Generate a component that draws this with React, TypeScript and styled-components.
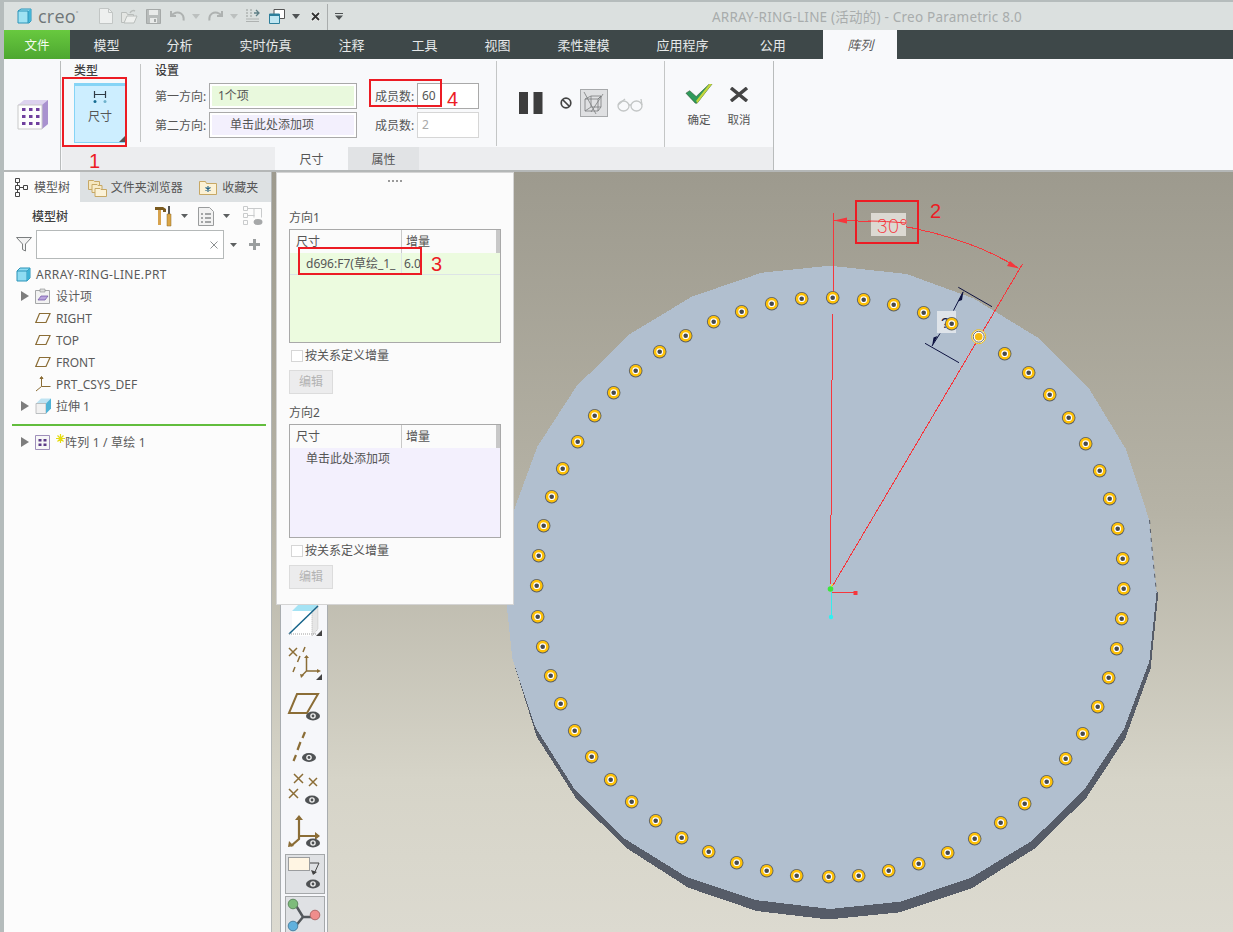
import React from "react";
import styled, { createGlobalStyle } from "styled-components";

const Global = createGlobalStyle`
  html, body { margin: 0; padding: 0; background: #b5bcbc; }
  body { font-family: "Noto Sans", "Noto Sans CJK SC", sans-serif; font-size: 12px; color: #555; }
  * { box-sizing: border-box; }
`;

const RED = "#ec1c24";

const Page = styled.div`
  position: relative;
  width: 1233px;
  height: 932px;
  overflow: hidden;
  padding: 2px 0 0 4px;
  background: #b5bcbc;
`;

/* ---------- title bar ---------- */
const TitleBar = styled.div`
  height: 28px;
  background: #dbe0df;
  display: flex;
  align-items: center;
  padding-left: 13px;
`;
const LogoText = styled.span`
  font-family: "Open Sans", sans-serif;
  font-size: 18px;
  color: #6f7678;
  width: 60px;
  padding-left: 6px;
  line-height: 28px;
  letter-spacing: 0.2px;
  sup { font-size: 6px; position: relative; top: -1px; vertical-align: super; line-height: 0; }
`;
const QuickSlot = styled.span<{ $w: number }>`
  width: ${(p) => p.$w}px;
  height: 28px;
  flex: none;
  display: flex;
  align-items: center;
`;
const TitleText = styled.span`
  margin-left: 369px;
  font-size: 13.5px;
  letter-spacing: 0.22px;
  color: #a8acac;
  white-space: nowrap;
`;

/* ---------- tab bar ---------- */
const TabBar = styled.div`
  height: 29px;
  background: #3e4849;
  display: flex;
  align-items: stretch;
`;
const FileTab = styled.div`
  width: 66px;
  background: linear-gradient(180deg, #68c93f 0%, #4da730 100%);
  color: #f4fbef;
  font-size: 12.5px;
  display: flex;
  align-items: center;
  justify-content: center;
`;
const MenuTab = styled.div<{ $gap?: number }>`
  padding: 0 23.5px;
  margin-left: ${(p) => p.$gap ?? 0}px;
  color: #e6e9e9;
  font-size: 13px;
  display: flex;
  align-items: center;
`;
const ActiveTab = styled.div`
  margin-left: 14px;
  width: 74px;
  background: #f8f9fb;
  color: #5a5a5a;
  font-size: 13px;
  font-style: italic;
  display: flex;
  align-items: center;
  justify-content: center;
`;

/* ---------- ribbon ---------- */
const Ribbon = styled.div`
  height: 113px;
  background: #f8f9fb;
  display: flex;
  border-bottom: 2px solid #b4b7b7;
`;
const RibbonLead = styled.div`
  width: 56px;
  flex: none;
  display: flex;
  align-items: center;
  padding: 0 0 0 13px;
`;
const RibbonMain = styled.div`
  width: 714px;
  flex: none;
  margin-top: 2px;
  border-left: 1px solid #b9bcbc;
  border-right: 1px solid #b9bcbc;
  display: flex;
  flex-direction: column;
`;
const RibbonTools = styled.div`
  height: 86px;
  display: flex;
`;
const RibbonTabs = styled.div`
  height: 23px;
  background: #ecedef;
  margin-left: 1px;
  padding-left: 213px;
  display: flex;
`;
const SubTab = styled.div<{ $active?: boolean; $w: number }>`
  width: ${(p) => p.$w}px;
  background: ${(p) => (p.$active ? "#f8f9fb" : "#e1e3e5")};
  color: #555;
  font-size: 12px;
  display: flex;
  align-items: center;
  justify-content: center;
`;
const TypeGroup = styled.div`
  width: 79px;
  padding: 3px 0 0 13px;
  flex: none;
`;
const GroupLabel = styled.div`
  font-size: 12px;
  line-height: 14px;
  color: #3f3f3f;
  font-weight: 500;
`;
const TypeButton = styled.div`
  margin-top: 5px;
  width: 52px;
  height: 60px;
  background: #cdeeff;
  border: 1px solid #86d4f6;
  border-top: 3px solid #86d4f6;
  display: flex;
  flex-direction: column;
  align-items: center;
  position: relative;
  padding-top: 5px;
  color: #555;
  font-size: 12px;
  line-height: 16px;
`;
const CornerMark = styled.span`
  position: absolute;
  right: 0;
  bottom: 0;
  width: 0;
  height: 0;
  border-left: 6px solid transparent;
  border-bottom: 6px solid #555;
`;
const SettingsGroup = styled.div`
  width: 235px;
  flex: none;
  margin-top: 3px;
  height: 78px;
  border-left: 1px solid #c4c6c6;
  padding-left: 14px;
`;
const FieldRow = styled.div<{ $top: number }>`
  margin-top: ${(p) => p.$top}px;
  display: flex;
  align-items: center;
  white-space: nowrap;
`;
const FieldLabel = styled.span<{ $w: number }>`
  width: ${(p) => p.$w}px;
  flex: none;
  font-size: 12px;
  color: #555;
`;
const DropField = styled.div<{ $bg: string; $indent: number }>`
  width: 148px;
  height: 26px;
  border: 1px solid #a9a9a9;
  background: #fff;
  padding: 2px;
  div {
    height: 100%;
    background: ${(p) => p.$bg};
    padding-left: ${(p) => p.$indent}px;
    font-size: 12px;
    line-height: 20px;
    color: #555;
  }
`;
const MemberGroup = styled.div`
  width: 121px;
  flex: none;
  padding: 22px 0 0 0;
`;
const MemberInput = styled.div<{ $off?: boolean }>`
  width: 62px;
  height: 26px;
  border: 1px solid ${(p) => (p.$off ? "#d6d6d6" : "#a9a9a9")};
  background: #fff;
  padding-left: 4px;
  font-size: 12px;
  line-height: 24px;
  color: ${(p) => (p.$off ? "#a9a9a9" : "#555")};
`;
const ControlGroup = styled.div`
  width: 168px;
  flex: none;
  height: 85px;
  border-left: 1px solid #c4c6c6;
  display: flex;
`;
const ActionGroup = styled.div`
  flex: 1;
  height: 88px;
  border-left: 1px solid #c4c6c6;
  padding: 22px 0 0 20px;
  display: flex;
  gap: 12px;
`;
const ActionItem = styled.div`
  width: 28px;
  display: flex;
  flex-direction: column;
  align-items: center;
  font-size: 11.5px;
  line-height: 14px;
  color: #555;
  white-space: nowrap;
`;

/* ---------- workspace ---------- */
const Workspace = styled.div`
  height: 760px;
  display: flex;
`;
const ModelPanel = styled.div`
  width: 268px;
  flex: none;
  background: #fcfcfc;
  border-right: 1px solid #b4b7b7;
`;
const PanelTabs = styled.div`
  height: 30px;
  background: #dde1e3;
  display: flex;
  align-items: stretch;
`;
const PanelTab = styled.div<{ $active?: boolean; $w: number; $pad: number }>`
  width: ${(p) => p.$w}px;
  padding-left: ${(p) => p.$pad}px;
  background: ${(p) => (p.$active ? "#fcfcfc" : "transparent")};
  display: flex;
  align-items: center;
  gap: 5px;
  font-size: 12px;
  color: #555;
  white-space: nowrap;
`;
const TreeHead = styled.div`
  height: 28px;
  display: flex;
  align-items: center;
  padding-left: 28px;
`;
const TreeTitle = styled.span`
  width: 123px;
  font-size: 12px;
  font-weight: 500;
  color: #3f3f3f;
`;
const FilterRow = styled.div`
  height: 29px;
  display: flex;
  align-items: center;
  padding-left: 12px;
`;
const FilterInput = styled.div`
  margin-left: 4px;
  width: 188px;
  height: 29px;
  border: 1px solid #b5b9b9;
  background: #fff;
  display: flex;
  align-items: center;
  justify-content: flex-end;
  padding-right: 5px;
`;
const TreeList = styled.div`
  padding-top: 4px;
`;
const TreeRow = styled.div<{ $x: number }>`
  height: 22px;
  padding-left: ${(p) => p.$x}px;
  display: flex;
  align-items: center;
  font-size: 12px;
  color: #5a5a5a;
  white-space: nowrap;
`;
const Expander = styled.span`
  width: 0;
  height: 0;
  border-left: 8px solid #7d7d7d;
  border-top: 5px solid transparent;
  border-bottom: 5px solid transparent;
  margin-right: 6px;
`;
const TreeLabel = styled.span<{ $gap: number; $track?: number }>`
  margin-left: ${(p) => p.$gap}px;
  letter-spacing: ${(p) => p.$track ?? 0}px;
`;
const TreeDivider = styled.div`
  height: 2px;
  margin: 7px 5px 5px 8px;
  background: #62bd3d;
`;
const Viewport = styled.div`
  position: relative;
  flex: 1;
  background: linear-gradient(180deg, #9d9a8e 0%, #b6b3a6 45%, #d6d4c8 80%, #dcdad0 100%);
  padding-left: 8px;
`;
const Canvas = styled.svg`
  position: absolute;
  inset: 0;
`;
const ToolStrip = styled.div`
  position: relative;
  width: 48px;
  height: 760px;
  background: #f6f7fa;
  border-left: 1px solid #a9adb0;
  border-right: 1px solid #a9adb0;
  padding-top: 432px;
  display: flex;
  flex-direction: column;
  overflow: hidden;
`;
const ToolSlot = styled.div<{ $h: number }>`
  height: ${(p) => p.$h}px;
  flex: none;
  svg { display: block; }
`;
const ToolButton = styled.div`
  margin: 2px 0 0 4px;
  width: 40px;
  height: 40px;
  flex: none;
  border: 1px solid #a5a8aa;
  background: #dfe1e4;
  position: relative;
  svg { display: block; position: absolute; left: -5px; top: -1px; }
`;

/* ---------- floating options panel ---------- */
const OptionsPanel = styled.div`
  position: absolute;
  left: 4px;
  top: 0;
  width: 238px;
  height: 433px;
  background: #fbfbfb;
  border: 1px solid #d4d4d4;
  padding: 0 12px;
  font-size: 12px;
  color: #555;
`;
const Grip = styled.div`
  height: 14px;
  display: flex;
  justify-content: center;
  align-items: center;
  gap: 2px;
  padding-top: 1px;
  span { width: 2px; height: 2px; background: #9a9a9a; }
`;
const DirLabel = styled.div<{ $top: number }>`
  margin-top: ${(p) => p.$top}px;
  line-height: 18px;
  height: 16px;
`;
const DimTable = styled.div<{ $bg: string }>`
  margin-top: 4px;
  width: 212px;
  height: 114px;
  border: 1px solid #a9a9a9;
  background: ${(p) => p.$bg};
`;
const DimHead = styled.div`
  height: 23px;
  background: #fbfbfb;
  display: grid;
  grid-template-columns: 111px 1fr 4px;
  line-height: 23px;
  div { padding-left: 6px; }
  div + div { border-left: 1px solid #c9c9c9; padding-left: 4px; }
  div:last-child { background: #c8c8c8; padding: 0; border: 0; }
`;
const DimRow = styled.div`
  height: 22px;
  display: grid;
  grid-template-columns: 111px 1fr;
  line-height: 21px;
  border-bottom: 1px solid #dde4e6;
  white-space: nowrap;
  overflow: hidden;
  div:first-child { padding-left: 16px; overflow: hidden; }
  div + div { border-left: 1px solid #dde4e6; padding-left: 2px; }
`;
const DimHint = styled.div`
  padding-left: 16px;
  line-height: 22px;
`;
const CheckRow = styled.div`
  margin-top: 7px;
  height: 12px;
  display: flex;
  align-items: center;
  padding-left: 2px;
  gap: 2px;
  line-height: 14px;
`;
const CheckBox = styled.span`
  width: 12px;
  height: 12px;
  border: 1px solid #d6d6d6;
  background: #fff;
`;
const EditButton = styled.div`
  margin-top: 8px;
  width: 44px;
  height: 24px;
  background: #ececed;
  border: 1px solid #dcdcdc;
  color: #b3b3b3;
  text-align: center;
  line-height: 22px;
`;

/* ---------- red annotations ---------- */
const MarkBox = styled.div<{ $x: number; $y: number; $w: number; $h: number }>`
  position: absolute;
  left: ${(p) => p.$x}px;
  top: ${(p) => p.$y}px;
  width: ${(p) => p.$w}px;
  height: ${(p) => p.$h}px;
  border: 2px solid ${RED};
  pointer-events: none;
`;
const MarkNum = styled.div<{ $x: number; $y: number }>`
  position: absolute;
  left: ${(p) => p.$x}px;
  top: ${(p) => p.$y}px;
  color: ${RED};
  font-family: "Liberation Sans", sans-serif;
  font-size: 20px;
  line-height: 20px;
`;

/* ---------- data ---------- */
const MENU = ["模型", "分析", "实时仿真", "注释", "工具", "视图", "柔性建模", "应用程序"];
const HOLES: [number, number][] = [
  [832.7,297.7],[863.7,299.7],[893.7,304.7],[923.7,312.7],[951.7,323.7],[1004.7,353.7],[1028.7,372.7],[1049.7,394.7],
  [1068.7,417.7],[1085.7,443.7],[1099.7,470.7],[1109.7,498.7],[1117.7,528.7],[1122.7,558.7],[1123.7,588.7],[1121.7,618.7],
  [1116.7,648.7],[1108.7,677.7],[1097.7,706.7],[1082.7,733.7],[1065.7,758.7],[1046.7,781.7],[1024.7,803.7],[1000.7,822.7],
  [974.7,838.7],[947.7,852.7],[918.7,863.7],[888.7,870.7],[858.7,875.7],[828.7,876.7],[796.7,875.7],[766.7,870.7],
  [736.7,862.7],[708.7,851.7],[681.7,837.7],[655.7,820.7],[631.7,801.7],[610.7,779.7],[591.7,756.7],[574.7,730.7],
  [560.7,703.7],[550.7,675.7],[542.7,646.7],[537.7,616.7],[536.7,585.7],[538.7,555.7],[543.7,525.7],[551.7,496.7],
  [562.7,468.7],[577.7,441.7],[594.7,415.7],[613.7,392.7],[635.7,370.7],[659.7,351.7],[685.7,335.7],[713.7,321.7],
  [741.7,311.7],[771.7,303.7],[801.7,298.7],
];
const FACE = "830,265.7 906.7,274 973.3,298.3 1037.3,337.3 1088.3,387.3 1126,449.3 1149.3,520 1156.7,591.7 1149.3,661.7 1124,729 1084,790 1031.7,841 970,878.3 900,901.7 830,909 755,900 686,876.7 624,838.3 574,788.3 535,726.7 512.3,658.3 506.7,605 514,510 537.3,446.7 576.7,386 630,334 691.7,296.7 761.7,272.7";
const SIDE = "1156.7,591.7 1158.3,593.3 1150.7,668.3 1125,739 1086,798.3 1035,848.3 971.7,888.3 900,912.3 830,919.3 826.7,919.3 756.7,911 688.3,887.7 626,847.7 576,798.3 536.7,736.7 512.3,658.3 530,650 830,600";

/* ---------- icons ---------- */
const BROWN = "#8b6d36";
type IconProps = { x: number; y: number; w: number; h: number; children: React.ReactNode };
const Ico = ({ x, y, w, h, children }: IconProps) => (
  <svg width={w} height={h} viewBox={`${x} ${y} ${w} ${h}`} style={{ flex: "none" }}>{children}</svg>
);
const Caret = ({ color = "#7c7f80" }: { color?: string }) => (
  <svg width="8" height="5" viewBox="0 0 8 5"><path d="M0 0h8L4 5z" fill={color} /></svg>
);
const Eye = ({ cx, cy }: { cx: number; cy: number }) => (
  <g>
    <ellipse cx={cx} cy={cy} rx="7" ry="4.4" fill="#4f5254" />
    <circle cx={cx} cy={cy} r="2.8" fill="#eee" />
    <circle cx={cx} cy={cy} r="1.4" fill="#4f5254" />
  </g>
);
const PartCube = () => (
  <svg width="15" height="15" viewBox="0 0 15 15">
    <path d="M1 4l3-3h10v10l-3 3H1z" fill="#8fdcf2" stroke="#2a93b8" />
    <path d="M1 4h10v10M11 4l3-3" fill="none" stroke="#2a93b8" />
    <path d="M11 4l3-3v10l-3 3z" fill="#3fb1d4" />
  </svg>
);
const Plane = () => (
  <svg width="16" height="12" viewBox="0 0 16 12" style={{ flex: "none" }}>
    <path d="M4.5 1.5h10.5l-4 9H.8z" fill="none" stroke={BROWN} strokeWidth="1.2" />
  </svg>
);

export default function App() {
  return (
    <Page>
      <Global />
      <TitleBar>
        <svg width="15" height="16" viewBox="0 0 15 16" style={{ flex: "none" }}>
          <path d="M1 3l3-2h10v12l-2 2H1z" fill="#9ee2f3" stroke="#2b94b9" />
          <path d="M11 3l3-2v12l-3 2z" fill="#44b4d6" />
          <path d="M1 3h10v12" fill="none" stroke="#2b94b9" />
        </svg>
        <LogoText>creo<sup>°</sup></LogoText>
        <QuickSlot $w={7} />
        <QuickSlot $w={22}>
          <svg width="14" height="16" viewBox="0 0 14 16"><path d="M.5.5h9l4 4v11H.5z" fill="#eef0ef" stroke="#c2c6c5" /><path d="M9.5.5v4h4" fill="none" stroke="#c2c6c5" /></svg>
        </QuickSlot>
        <QuickSlot $w={25}>
          <svg width="17" height="15" viewBox="0 0 17 15"><path d="M.5 3.5h5l1 2h6v8H.5z" fill="#e4e6e3" stroke="#b9bdbb" /><path d="M3 14l3-7h10l-3 7z" fill="#eef0ee" stroke="#b9bdbb" /><path d="M9 4c1-2 3-3 5-2" fill="none" stroke="#b9bdbb" strokeWidth="1.5" /></svg>
        </QuickSlot>
        <QuickSlot $w={24}>
          <svg width="15" height="15" viewBox="0 0 15 15"><path d="M.5.5h14v14H.5z" fill="#b8bcbb" stroke="#a5a9a8" /><path d="M3 1h9v5H3z" fill="#e8eae9" /><path d="M4 9h7v5H4z" fill="#e8eae9" /><path d="M8 10h2v3H8z" fill="#a5a9a8" /></svg>
        </QuickSlot>
        <QuickSlot $w={22}>
          <svg width="15" height="12" viewBox="0 0 15 12"><path d="M1 1v5h5M1.5 6C3 2.500 8 1.500 11 3.500c2.500 1.700 3 4 2.500 7" fill="none" stroke="#aeb2b1" strokeWidth="2" /></svg>
        </QuickSlot>
        <QuickSlot $w={16}><Caret color="#bcc0bf" /></QuickSlot>
        <QuickSlot $w={22}>
          <svg width="15" height="12" viewBox="0 0 15 12"><path d="M14 1v5H9M13.500 6C12 2.500 7 1.500 4 3.500c-2.500 1.700-3 4-2.500 7" fill="none" stroke="#aeb2b1" strokeWidth="2" /></svg>
        </QuickSlot>
        <QuickSlot $w={15}><Caret color="#bcc0bf" /></QuickSlot>
        <QuickSlot $w={24}>
          <svg width="15" height="16" viewBox="0 0 15 16" fill="none"><path d="M1 2h2M1 5h2M1 8h2M5 2h2M5 5h2M5 8h2" stroke="#aeb2b1" strokeWidth="1.5" /><path d="M1 11h13M1 13.500h13" stroke="#aeb2b1" /><path d="M9 5h5M11 2l3 3-3 3" stroke="#5f7f86" strokeWidth="1.3" /></svg>
        </QuickSlot>
        <QuickSlot $w={23}>
          <svg width="16" height="15" viewBox="0 0 16 15"><path d="M5 .5h10.500v9H5z" fill="#fff" stroke="#555" /><path d="M.5 5h10v9.500H.5z" fill="#bfe6f2" stroke="#2d7f9b" /><path d="M.5 5h10v2H.5z" fill="#2d7f9b" /></svg>
        </QuickSlot>
        <QuickSlot $w={18}><Caret color="#4f5354" /></QuickSlot>
        <QuickSlot $w={17}>
          <svg width="11" height="11" viewBox="0 0 11 11"><path d="M1.500 1.500l8 8M9.500 1.500l-8 8" stroke="#f4f5f4" strokeWidth="3.500" /><path d="M2 2l7 7M9 2l-7 7" stroke="#333" strokeWidth="1.800" /></svg>
        </QuickSlot>
        <QuickSlot $w={8}>
          <svg width="1" height="28" viewBox="0 0 1 28"><path d="M.5 2v26" stroke="#a9adad" /></svg>
        </QuickSlot>
        <QuickSlot $w={8}>
          <svg width="8" height="7" viewBox="0 0 8 7"><path d="M0 0h8v1H0zM0 2.500h8L4 7z" fill="#4f5354" /></svg>
        </QuickSlot>
        <TitleText>ARRAY-RING-LINE (活动的) - Creo Parametric 8.0</TitleText>
      </TitleBar>

      <TabBar>
        <FileTab>文件</FileTab>
        {MENU.map((m) => <MenuTab key={m}>{m}</MenuTab>)}
        <MenuTab $gap={4}>公用</MenuTab>
        <ActiveTab>阵列</ActiveTab>
      </TabBar>

      <Ribbon>
        <RibbonLead>
          <svg width="31" height="31" viewBox="0 0 31 31">
            <path d="M1 6l6-5h24v24l-6 5H1z" fill="#dcd2ee" />
            <path d="M25 6l6-5v24l-6 5z" fill="#a992cf" />
            <path d="M1 6h24v24H1z" fill="#fdfdfd" stroke="#c9c9c9" />
            {[9, 16, 23].map((cy) => [5, 12, 19].map((cx) => (
              <rect key={`${cx}-${cy}`} x={cx} y={cy} width="3.500" height="3" fill="#6f3f9e" />
            )))}
          </svg>
        </RibbonLead>
        <RibbonMain>
          <RibbonTools>
            <TypeGroup>
              <GroupLabel>类型</GroupLabel>
              <TypeButton>
                <svg width="14" height="12" viewBox="0 0 14 12" style={{ marginBottom: 6 }}>
                  <path d="M1.500 0v7M12.500 0v7M1.500 3.500h11" stroke="#2f3a44" fill="none" strokeWidth="1.200" />
                  <circle cx="2" cy="10.500" r="1.500" fill="#176d93" />
                  <circle cx="12" cy="10.500" r="1.500" fill="#6fb2cc" />
                </svg>
                尺寸
                <CornerMark />
              </TypeButton>
            </TypeGroup>
            <SettingsGroup>
              <GroupLabel>设置</GroupLabel>
              <FieldRow $top={5}>
                <FieldLabel $w={54}>第一方向:</FieldLabel>
                <DropField $bg="#e9f9dd" $indent={6}><div>1个项</div></DropField>
              </FieldRow>
              <FieldRow $top={3}>
                <FieldLabel $w={54}>第二方向:</FieldLabel>
                <DropField $bg="#f3f0fd" $indent={18}><div>单击此处添加项</div></DropField>
              </FieldRow>
            </SettingsGroup>
            <MemberGroup>
              <FieldRow $top={0}>
                <FieldLabel $w={42}>成员数:</FieldLabel>
                <MemberInput>60</MemberInput>
              </FieldRow>
              <FieldRow $top={3}>
                <FieldLabel $w={42}>成员数:</FieldLabel>
                <MemberInput $off>2</MemberInput>
              </FieldRow>
            </MemberGroup>
            <ControlGroup>
              <Ico x={497} y={61} w={167} h={84}>
                <rect x="519" y="92" width="9" height="22" fill="#3d3d3d" />
                <rect x="533.500" y="92" width="9" height="22" fill="#3d3d3d" />
                <circle cx="566" cy="103" r="4.800" fill="none" stroke="#444" strokeWidth="1.700" />
                <path d="M562.500 99.500l7 7" stroke="#444" strokeWidth="1.700" />
                <rect x="580.500" y="89.500" width="27" height="27" fill="#dfe0e2" stroke="#a7a9ab" />
                <g fill="none" stroke="#7a7c7e" strokeWidth="0.800">
                  <path d="M585 99l6-3h10l-3 3zM585 99v12h13v-12M598 99l3-3v11l-3 4M591 96v11h10M585 111l6-4" />
                  <path d="M584 92l12 22M603 94l-12 18" />
                </g>
                <g fill="none" stroke="#c3c6c6" strokeWidth="1.300">
                  <path d="M618 106a5.500 5 0 1 0 11 0a5.500 5 0 1 0 -11 0M631 106a5.500 5 0 1 0 11 0a5.500 5 0 1 0 -11 0" />
                  <path d="M629 105h2M618 105l7-6M642 105l-1-6" />
                </g>
              </Ico>
            </ControlGroup>
            <ActionGroup>
              <ActionItem>
                <svg width="28" height="20" viewBox="0 0 30 24" preserveAspectRatio="none" style={{ marginTop: 1, marginBottom: 9, flex: "none" }}>
                  <path d="M1 11l4-3 7 7L26 0h3L13 23h-2z" fill="#2f9a5b" stroke="#2f4d2a" strokeWidth="0.600" />
                  <path d="M26 0h3L13 23l-1-3z" fill="#c5d63a" />
                </svg>
                确定
              </ActionItem>
              <ActionItem>
                <svg width="20" height="15" viewBox="0 0 20 15" style={{ marginTop: 4, marginBottom: 11, flex: "none" }}>
                  <path d="M2 1l16 13M18 1L2 14" stroke="#444" strokeWidth="3.500" />
                </svg>
                取消
              </ActionItem>
            </ActionGroup>
          </RibbonTools>
          <RibbonTabs>
            <SubTab $active $w={73}>尺寸</SubTab>
            <SubTab $w={71}>属性</SubTab>
          </RibbonTabs>
        </RibbonMain>
      </Ribbon>

      <Workspace>
        <ModelPanel>
          <PanelTabs>
            <PanelTab $active $w={76} $pad={11}>
              <svg width="14" height="19" viewBox="0 0 14 19" fill="none" stroke="#444">
                <path d="M.5.500h4v4h-4zM.5 7.500h4v4h-4zM8.500 7.500h4v4h-4zM.5 14.500h4v4h-4zM2.500 4.500v3M2.500 11.500v3M4.500 9.500h4" />
              </svg>
              模型树
            </PanelTab>
            <PanelTab $w={116} $pad={8}>
              <svg width="19" height="19" viewBox="0 0 19 19">
                <path d="M.5 2.500h5l1 1h5v8H.5z" fill="#f5e7bf" stroke="#c7a865" />
                <path d="M4 6.500h5l1 1h4v7H4z" fill="#f7ecca" stroke="#c7a865" />
                <path d="M7 10.500h5l1 1h5.500v7H7z" fill="#fbf2d8" stroke="#c7a865" />
              </svg>
              <span style={{ marginLeft: -1 }}>文件夹浏览器</span>
            </PanelTab>
            <PanelTab $w={76} $pad={4}>
              <svg width="18" height="15" viewBox="0 0 18 15">
                <path d="M.5 1.500h6l1 2h10v11H.5z" fill="#fbf1d5" stroke="#c7a865" />
                <path d="M9 6v6M6.500 7.500l5 3M11.500 7.500l-5 3" stroke="#1e5f86" strokeWidth="1.100" />
              </svg>
              收藏夹
            </PanelTab>
          </PanelTabs>
          <TreeHead>
            <TreeTitle>模型树</TreeTitle>
            <svg width="110" height="22" viewBox="155 205 110 22" style={{ flex: "none" }}>
              <path d="M155 207h8l3 2v3h-3v-2h-2v15h-3v-15h-3z" fill="#7b5a1e" />
              <path d="M158 210h3v15h-3z" fill="#d6a24d" />
              <path d="M168 206h2v8h-2z" fill="#555" />
              <path d="M167 214h4v12h-4z" fill="#d9a546" stroke="#8d6a28" strokeWidth="0.500" />
              <path d="M181 214h7l-3.500 4z" fill="#5d6061" />
              <path d="M198.500 207.500h11l4 4v14h-15z" fill="#f2f2f2" stroke="#9a9c9d" />
              <path d="M201 214h2M205 214h6M201 218h2M205 218h6M201 222h2M205 222h6" stroke="#55595a" />
              <path d="M223 214h7l-3.500 4z" fill="#5d6061" />
              <g fill="none" stroke="#c9cbcc">
                <path d="M243.500 206.500h4v4h-4zM243.500 213.500h4v4h-4zM243.500 220.500h4v4h-4zM247.500 208.500h14v9M254 208.500v9M247.500 215.500h7" />
              </g>
              <ellipse cx="258" cy="222" rx="4.500" ry="3" fill="#a6a8a9" />
            </svg>
          </TreeHead>
          <FilterRow>
            <svg width="16" height="15" viewBox="0 0 16 15">
              <path d="M.5.500h15L9.500 7v7l-3-1.500V7z" fill="#f2f2f2" stroke="#7b7e7f" />
            </svg>
            <FilterInput>
              <svg width="8" height="8" viewBox="0 0 8 8"><path d="M.5.500l7 7M7.500.500l-7 7" stroke="#8c9091" /></svg>
            </FilterInput>
            <svg width="40" height="12" viewBox="228 230 40 12" style={{ flex: "none", marginLeft: 4 }}>
              <path d="M230 234h7l-3.500 4z" fill="#5d6061" />
              <path d="M249 235.500h11M254.500 230v11" stroke="#9a9e9f" strokeWidth="3" />
            </svg>
          </FilterRow>
          <TreeList>
            <TreeRow $x={12}>
              <PartCube /><TreeLabel $gap={5} $track={0.35}>ARRAY-RING-LINE.PRT</TreeLabel>
            </TreeRow>
            <TreeRow $x={17}>
              <Expander />
              <svg width="15" height="16" viewBox="0 0 15 16" style={{ flex: "none" }}>
                <path d="M.5 2.500h14v13H.5z" fill="#f2f2f2" stroke="#a5a7a8" />
                <path d="M5 1h5v3H5z" fill="#ddd" stroke="#8c8e8f" strokeWidth="0.600" />
                <path d="M3 12l3-4h7l-3 4z" fill="#b9a4dd" stroke="#6b4fa0" strokeWidth="0.700" />
              </svg>
              <TreeLabel $gap={6}>设计项</TreeLabel>
            </TreeRow>
            {["RIGHT", "TOP", "FRONT"].map((n) => (
              <TreeRow $x={31} key={n}>
                <Plane />
                <TreeLabel $gap={5}>{n}</TreeLabel>
              </TreeRow>
            ))}
            <TreeRow $x={31}>
              <svg width="16" height="16" viewBox="0 0 16 16" style={{ flex: "none" }} fill="none" stroke={BROWN}>
                <path d="M6.500 1v9.500L1 15M6.500 10.500H15.500" />
                <path d="M5 2.500L6.500.5 8 2.500z" fill={BROWN} />
              </svg>
              <TreeLabel $gap={5}>PRT_CSYS_DEF</TreeLabel>
            </TreeRow>
            <TreeRow $x={17}>
              <Expander />
              <svg width="16" height="16" viewBox="0 0 16 16" style={{ flex: "none" }}>
                <path d="M1 5.500L6 .5h10v10l-5 5H1z" fill="#bfe3f2" />
                <path d="M1 5.500h10v10H1z" fill="#f1f1f1" stroke="#a9abac" strokeWidth="0.700" />
                <path d="M11 5.500l5-5v10l-5 5z" fill="#4fb3d6" />
              </svg>
              <TreeLabel $gap={5}>拉伸 1</TreeLabel>
            </TreeRow>
            <TreeDivider />
            <TreeRow $x={17}>
              <Expander />
              <svg width="15" height="15" viewBox="0 0 15 15" style={{ flex: "none" }}>
                <path d="M.5.500h14v14H.5z" fill="#f7f7f7" stroke="#9f8fba" />
                <path d="M3.500 4h3v2.500h-3zM8.500 4h3v2.500h-3zM3.500 8.500h3V11h-3zM8.500 8.500h3V11h-3z" fill="#5c3a87" />
              </svg>
              <svg width="9" height="9" viewBox="0 0 9 9" style={{ flex: "none", margin: "-7px 0 0 6px" }}>
                <path d="M4.500 0v9M0 4.500h9M1.500 1.500l6 6M7.500 1.500l-6 6" stroke="#e5dc10" strokeWidth="1.200" />
              </svg>
              <TreeLabel $gap={0} $track={0.2}>阵列 1 / 草绘 1</TreeLabel>
            </TreeRow>
          </TreeList>
        </ModelPanel>

        <Viewport>
          <Canvas width="961" height="760" viewBox="272 172 961 760">
            <g shapeRendering="crispEdges">
              <polygon points={SIDE} fill="#565c68" />
              <polygon points={FACE} fill="#b1bfcf" />
            </g>
            <path d="M1149.500 520l3.500 40 3.500 32" fill="none" stroke="#565c68" strokeDasharray="4 5" />
            <g fill="none" stroke="#f6363c" shapeRendering="crispEdges">
              <path d="M833.500 213v85M832.500 314l-2 270" />
              <path d="M832.500 586L1022.500 264" />
              <path d="M834 220.500C900 219 975 240 1018 268" />
            </g>
            <path d="M834 220.500l13-3v6zM1019 268.500l-12-2.500 3-5z" fill="#f6363c" />
            <rect x="871" y="213" width="35" height="23" fill="#dcd9d2" />
            <path d="M868 221C880 221 893 222 906 223" stroke="#f6363c" fill="none" />
            <text x="876.500" y="232.500" fontFamily="Inter, sans-serif" fontWeight="200" fontSize="19" fill="#f6363c">30°</text>
            <rect x="937" y="311" width="19" height="22" fill="#dfe4ea" />
            <text x="941" y="328" fontFamily="Liberation Sans, sans-serif" fontSize="15" fill="#15183d">?</text>
            <g stroke="#0d1240" fill="none">
              <path d="M958.300 287.300L992 306.700M925 343.300L959 362.700M963 292L953.500 310.500M940 333.500L932 346" />
            </g>
            <path d="M963.500 291l-1.500 9-4 1.500zM932 346.500l1.500-9 4-1.500z" fill="#0d1240" />
            {HOLES.map(([cx, cy]) => (
              <g key={`${cx}-${cy}`}>
                <circle cx={cx} cy={cy} r="6.800" fill="#5b5f63" />
                <circle cx={cx} cy={cy} r="5.900" fill="#fec107" />
                <circle cx={cx} cy={cy} r="3.400" fill="#fff" />
                <circle cx={cx} cy={cy} r="2.300" fill="#47494c" />
              </g>
            ))}
            <circle cx="978.700" cy="336.700" r="7" fill="#fff" stroke="#f1bd10" />
            <circle cx="978.700" cy="336.700" r="5.500" fill="none" stroke="#666" />
            <circle cx="978.700" cy="336.700" r="3.800" fill="#f7b90f" />
            <path d="M831.500 592l0 25" stroke="#35ecec" shapeRendering="crispEdges" />
            <circle cx="831" cy="617" r="2.200" fill="#2ff0f0" />
            <path d="M832 592.500h23" stroke="#f6363c" strokeWidth="1.200" shapeRendering="crispEdges" />
            <rect x="853.500" y="591" width="4" height="4" fill="#f6363c" />
            <path d="M832.500 584l-1.500 3" stroke="#eded2c" strokeWidth="1.200" />
            <circle cx="830.500" cy="589" r="2.800" fill="#3be83b" />
          </Canvas>

          <ToolStrip>
            <ToolSlot $h={40}>
              <Ico x={281} y={604} w={46} h={40}>
                <path d="M292 611l7-7h20v25l-6 7H292z" fill="#fff" />
                <path d="M292 611l7-7h20l-7 7z" fill="#a5e3f4" />
                <path d="M312 611l6-6v24l-6 7z" fill="#e6e6e6" stroke="#b9b9b9" strokeDasharray="1 1" />
                <path d="M289 634L318 606" stroke="#16648a" strokeWidth="1.500" />
                <path d="M289 634h27" stroke="#9e9e9e" strokeDasharray="1 1" />
                <path d="M322 630v6h-6z" fill="#444" />
              </Ico>
            </ToolSlot>
            <ToolSlot $h={44}>
              <Ico x={281} y={644} w={46} h={44}>
                <g stroke={BROWN} fill="none" strokeWidth="1.500">
                  <path d="M289 648l8 8M297 648l-8 8M305 647l-2 5M300 656l-2.500 6M295 667l-2 5" />
                  <path d="M306.500 657v14l-5 5M306.500 671h12" />
                </g>
                <path d="M304 658l2.500-3 2.500 3zM317 669l4 2-4 2zM301 678l-1-4 4 1z" fill={BROWN} />
                <path d="M322 674v6h-6z" fill="#444" />
              </Ico>
            </ToolSlot>
            <ToolSlot $h={38}>
              <Ico x={281} y={688} w={46} h={38}>
                <path d="M297 694h21l-11 19h-18z" fill="none" stroke={BROWN} strokeWidth="2" />
                <Eye cx={313} cy={716} />
              </Ico>
            </ToolSlot>
            <ToolSlot $h={42}>
              <Ico x={281} y={726} w={46} h={42}>
                <path d="M305 732l-2.500 6M300.500 742l-3 8M296 755l-2.500 6" stroke={BROWN} strokeWidth="2.200" fill="none" />
                <Eye cx={309} cy={757.500} />
              </Ico>
            </ToolSlot>
            <ToolSlot $h={42}>
              <Ico x={281} y={768} w={46} h={42}>
                <path d="M294 774l9 9M303 774l-9 9M289 789l9 9M298 789l-9 9M309 778l8 8M317 778l-8 8" stroke={BROWN} strokeWidth="1.500" fill="none" />
                <Eye cx={312} cy={800} />
              </Ico>
            </ToolSlot>
            <ToolSlot $h={42}>
              <Ico x={281} y={810} w={46} h={42}>
                <path d="M299 819v20l-8 7M299 836h20" stroke={BROWN} strokeWidth="2.200" fill="none" />
                <path d="M295 820l4-5 4 5zM315 832l5 4-5 4zM288 847l1-6 5 5z" fill={BROWN} />
                <Eye cx={313} cy={843} />
              </Ico>
            </ToolSlot>
            <ToolButton>
              <Ico x={281} y={854} w={46} h={40}>
                <rect x="288.500" y="857.500" width="21" height="13" fill="#fff5e3" stroke="#9b9d9f" />
                <path d="M310 863h9l-5 11" fill="none" stroke="#444" />
                <path d="M311 870l2 5 4-3z" fill="#444" />
                <Eye cx={313} cy={884} />
              </Ico>
            </ToolButton>
            <ToolButton>
              <Ico x={281} y={896} w={46} h={40}>
                <path d="M295 904l8 13h12M303 917l-9 11" stroke="#53585c" strokeWidth="2.500" fill="none" />
                <circle cx="293" cy="904" r="4.800" fill="#7dbb7a" stroke="#5f8a60" />
                <circle cx="315" cy="915" r="4.800" fill="#ef8d8c" stroke="#b06a6a" />
                <circle cx="293" cy="926" r="4.800" fill="#61b1dd" stroke="#4a82a3" />
              </Ico>
            </ToolButton>
          </ToolStrip>

          <OptionsPanel>
            <Grip><span /><span /><span /><span /></Grip>
            <DirLabel $top={22}>方向1</DirLabel>
            <DimTable $bg="#ecfbdf">
              <DimHead><div>尺寸</div><div>增量</div><div /></DimHead>
              <DimRow><div>d696:F7(草绘_1_</div><div>6.0</div></DimRow>
            </DimTable>
            <CheckRow><CheckBox />按关系定义增量</CheckRow>
            <EditButton>编辑</EditButton>
            <DirLabel $top={10}>方向2</DirLabel>
            <DimTable $bg="#f3f0fd">
              <DimHead><div>尺寸</div><div>增量</div><div /></DimHead>
              <DimHint>单击此处添加项</DimHint>
            </DimTable>
            <CheckRow><CheckBox />按关系定义增量</CheckRow>
            <EditButton>编辑</EditButton>
          </OptionsPanel>
        </Viewport>
      </Workspace>

      <MarkBox $x={62} $y={77} $w={65} $h={70} />
      <MarkBox $x={369} $y={79} $w={73} $h={28} />
      <MarkBox $x={298} $y={247} $w={124} $h={28} />
      <MarkBox $x={855} $y={200} $w={64} $h={44} />
      <MarkNum $x={89} $y={151}>1</MarkNum>
      <MarkNum $x={930} $y={201}>2</MarkNum>
      <MarkNum $x={431} $y={254}>3</MarkNum>
      <MarkNum $x={447} $y={89}>4</MarkNum>
    </Page>
  );
}
